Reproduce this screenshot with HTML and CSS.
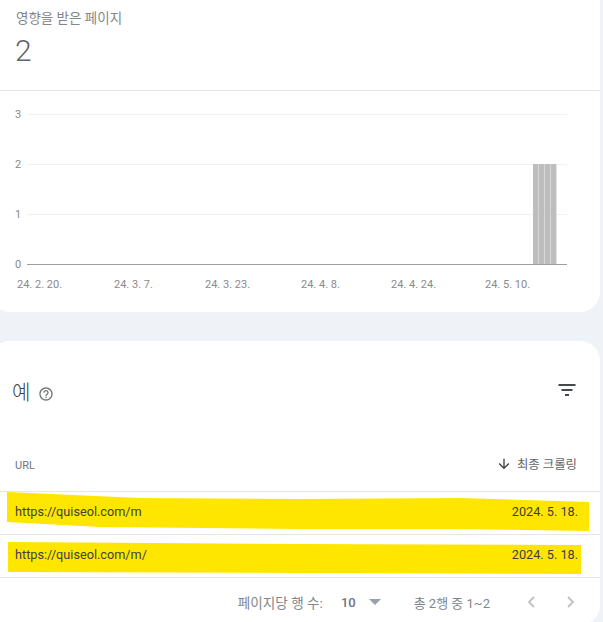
FILE: index.html
```html
<!DOCTYPE html>
<html lang="ko">
<head>
<meta charset="utf-8">
<title>영향을 받은 페이지</title>
<link rel="stylesheet" href="styles.css">
</head>
<body>
<div class="page">
  <section class="card chart-card">
    <div class="summary">
      <div class="summary-label">영향을 받은 페이지</div>
      <div class="summary-value">2</div>
    </div>
    <svg class="chart" width="610" height="221" viewBox="-10 91 610 221">
      <g class="grid">
        <line x1="27" x2="567" y1="114.5" y2="114.5"/>
        <line x1="27" x2="567" y1="164.5" y2="164.5"/>
        <line x1="27" x2="567" y1="214.5" y2="214.5"/>
      </g>
      <g class="bars">
        <rect x="533" y="164" width="5.6" height="100"/>
        <rect x="539" y="164" width="5.6" height="100"/>
        <rect x="545" y="164" width="5.6" height="100"/>
        <rect x="551" y="164" width="5.4" height="100"/>
      </g>
      <line class="axis" x1="27" x2="567" y1="264.5" y2="264.5"/>
      <g class="ticks">
        <text x="15" y="118">3</text>
        <text x="15" y="168">2</text>
        <text x="15" y="218">1</text>
        <text x="15" y="268">0</text>
        <text x="17" y="288">24. 2. 20.</text>
        <text x="114" y="288">24. 3. 7.</text>
        <text x="205" y="288">24. 3. 23.</text>
        <text x="301" y="288">24. 4. 8.</text>
        <text x="391" y="288">24. 4. 24.</text>
        <text x="485" y="288">24. 5. 10.</text>
      </g>
    </svg>
  </section>

  <section class="card table-card">
    <div class="table-title">
      <h2 class="title">예</h2>
      <svg class="help" width="16" height="16" viewBox="0 0 24 24"><path d="M11 18h2v-2h-2v2zm1-16C6.48 2 2 6.48 2 12s4.48 10 10 10 10-4.48 10-10S17.52 2 12 2zm0 18c-4.41 0-8-3.59-8-8s3.59-8 8-8 8 3.59 8 8-3.59 8-8 8zm0-14c-2.21 0-4 1.79-4 4h2c0-1.1.9-2 2-2s2 .9 2 2c0 2-3 1.75-3 5h2c0-2.25 3-2.5 3-5 0-2.21-1.79-4-4-4z"/></svg>
      <svg class="filter" width="24" height="24" viewBox="0 0 24 24"><path d="M3.5 6h17v2h-17zM6.5 11h11v2h-11zM10 16h4v2h-4z"/></svg>
    </div>
    <div class="table-head">
      <span>URL</span>
      <span class="sort">
        <svg width="16" height="16" viewBox="0 0 24 24"><path d="M20 12l-1.41-1.41L13 16.17V4h-2v12.17l-5.58-5.59L4 12l8 8 8-8z"/></svg>
        최종 크롤링
      </span>
    </div>
    <div class="row">
      <svg class="mark" width="603" height="43" viewBox="0 0 603 43"><path d="M7 1 L140 7 L300 8 L460 7 L589 11 L589 40 L450 38 L300 38 L100 36 L7 31 Z"/></svg>
      <span class="cell">https://quiseol.com/m</span>
      <span class="cell">2024. 5. 18.</span>
    </div>
    <div class="row">
      <svg class="mark" width="603" height="43" viewBox="0 0 603 43"><path d="M8 8 L150 9 L300 10 L581 11 L581 40 L300 39 L8 38 Z"/></svg>
      <span class="cell">https://quiseol.com/m/</span>
      <span class="cell">2024. 5. 18.</span>
    </div>
    <div class="pager">
      <span class="pager-label">페이지당 행 수:</span>
      <span class="pager-size">10</span>
      <svg class="caret" width="12" height="6" viewBox="0 0 12 6"><path d="M0 0h12L6 6z"/></svg>
      <span class="pager-range">총 2행 중 1~2</span>
      <svg class="chev" width="24" height="24" viewBox="0 0 24 24"><path d="M15 7l-5 5 5 5"/></svg>
      <svg class="chev next" width="24" height="24" viewBox="0 0 24 24"><path d="M9 7l5 5-5 5"/></svg>
    </div>
  </section>
</div>
</body>
</html>
```

FILE: styles.css
```css
* { box-sizing: border-box; }
html, body {
  margin: 0;
  height: 622px;
  overflow: hidden;
  background: #eff3f8;
}
body {
  font-family: Roboto, "Noto Sans CJK KR", sans-serif;
  color: #3c4043;
}
.page {
  width: 610px;
  margin-left: -10px;
  display: flex;
  flex-direction: column;
  gap: 29px;
}
.card {
  background: #fff;
  border-radius: 20px;
}
.chart-card {
  height: 312px;
  border-top-left-radius: 0;
  border-top-right-radius: 0;
  overflow: hidden;
}
.summary {
  height: 91px;
  padding: 10px 0 0 26px;
  border-bottom: 1px solid #e6e6e6;
}
.summary-label {
  font-size: 13.5px;
  line-height: 16px;
  color: #80868b;
}
.summary-value {
  font-size: 30px;
  line-height: 36px;
  margin-top: 7px;
  margin-left: -1px;
  color: #5f6368;
  font-weight: 300;
}
.chart { display: block; }
.grid line { stroke: #f1f1f1; stroke-width: 1; }
.axis { stroke: #9e9e9e; stroke-width: 1; }
.bars rect { fill: #bdbdbd; }
.ticks text { font-size: 11px; fill: #8a8a8a; font-family: Roboto, sans-serif; }
.table-card {
  height: 284px;
  overflow: hidden;
}
.table-title {
  display: flex;
  align-items: center;
  height: 100px;
  padding: 0 0 0 22px;
}
.title {
  margin: 3px 0 0;
  font-size: 20px;
  font-weight: 300;
  line-height: 24px;
}
.help { fill: #70757a; margin: 6px 0 0 8px; }
.filter { fill: #45484c; margin: -2px 21px 0 auto; }
.table-head {
  height: 51px;
  display: flex;
  justify-content: space-between;
  align-items: center;
  padding: 0 23px 2px 25px;
  font-size: 11px;
  color: #70757a;
  border-bottom: 1px solid #e6e6e6;
}
.sort {
  display: flex;
  align-items: center;
  gap: 5px;
  margin-top: -2px;
  font-size: 12.4px;
  color: #5f6368;
}
.sort svg { fill: #3c4043; }
.row {
  position: relative;
  height: 43px;
  display: flex;
  justify-content: space-between;
  align-items: center;
  padding: 0 22px 4px 25px;
  font-size: 12.7px;
  border-bottom: 1px solid #e6e6e6;
}
.mark {
  position: absolute;
  left: 10px;
  top: -1px;
  fill: #ffe600;
}
.cell { position: relative; }
.pager {
  height: 47px;
  display: flex;
  align-items: center;
  justify-content: flex-end;
  padding: 1px 17px 0 0;
  font-size: 13px;
  color: #80868b;
}
.pager-label { font-size: 13.6px; }
.pager-size { margin-left: 18px; font-weight: 500; color: #70757a; }
.caret { fill: #9aa0a6; margin-left: 13px; }
.pager-range { margin-left: 33px; margin-right: 29px; }
.chev { fill: none; stroke: #bdc1c6; stroke-width: 1.8; }
.next { margin-left: 16px; }
```
